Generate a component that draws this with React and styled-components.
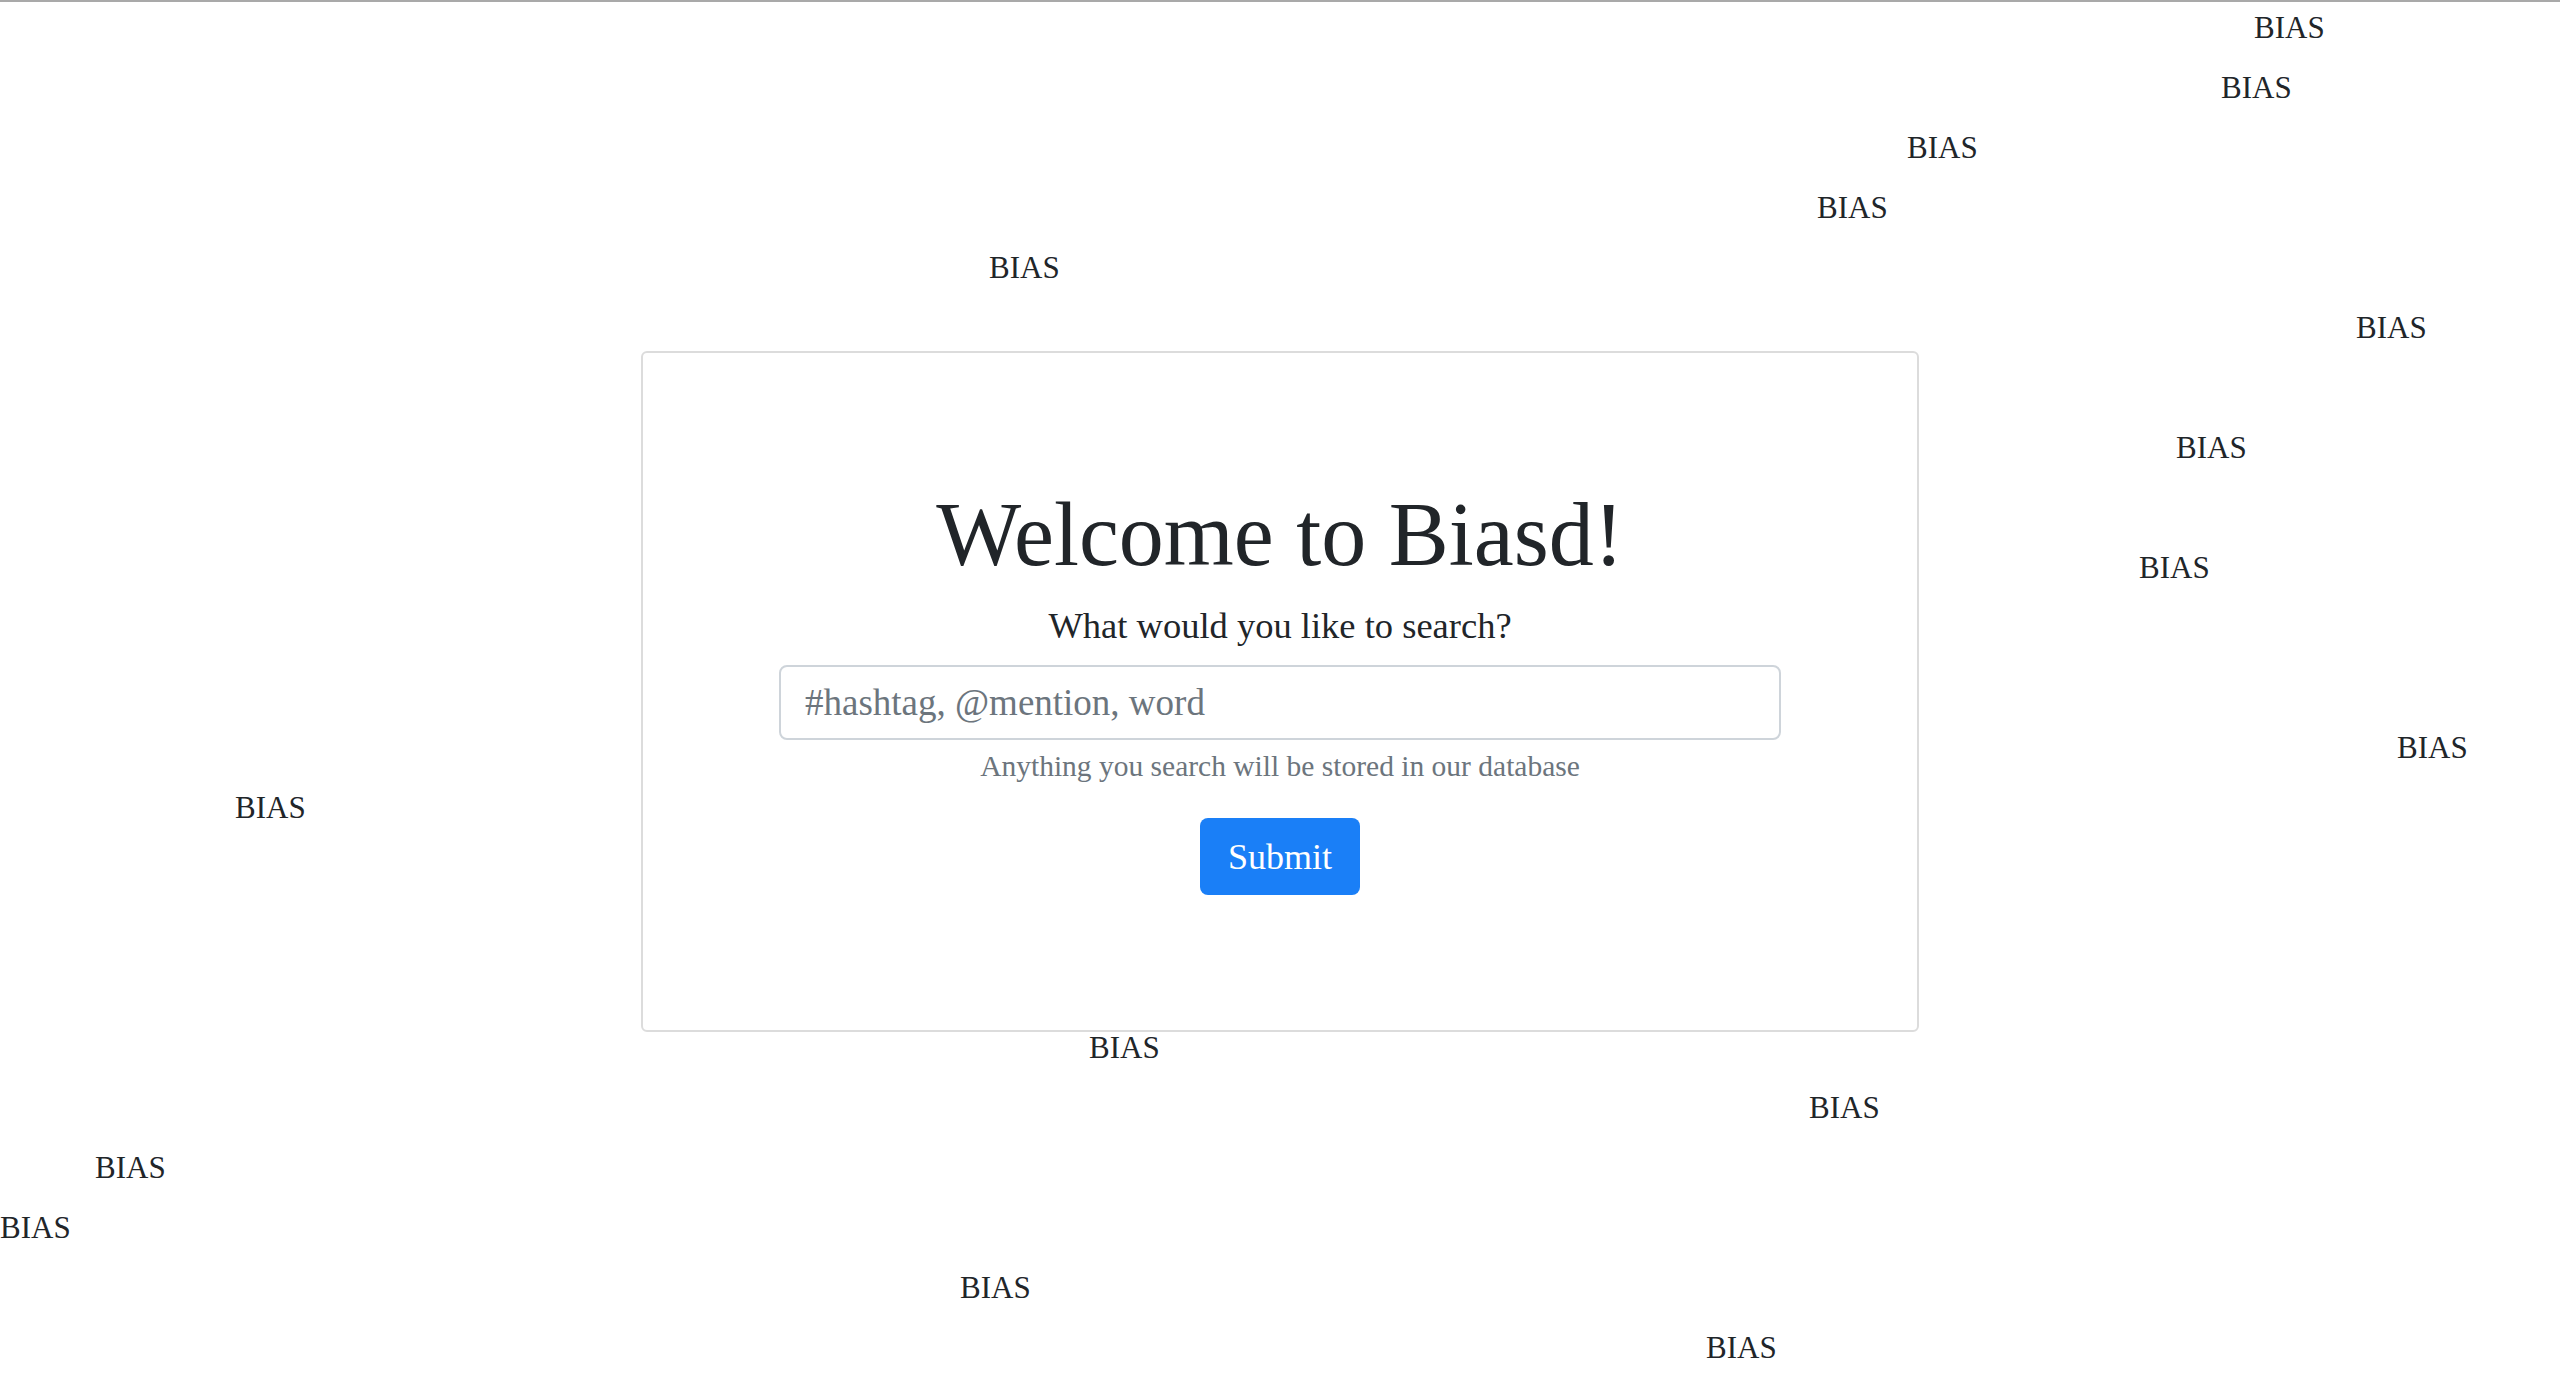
import styled, {createGlobalStyle} from "styled-components";

const GlobalStyle = createGlobalStyle`
  html, body {
    margin: 0;
    padding: 0;
    height: 100%;
    overflow: hidden;
    background: #fff;
  }
  body {
    font-family: "Liberation Serif", "Times New Roman", serif;
    color: #212529;
  }
`;

const Page = styled.div`
  position: relative;
  height: 100vh;
  border-top: 2px solid #a9a9a9;
  box-sizing: border-box;
  overflow: hidden;
`;

const WordList = styled.div`
  display: flex;
  flex-direction: column;
  margin-top: -4px;
`;

const Word = styled.div`
  height: 60px;
  line-height: 60px;
  font-size: 31px;
  white-space: nowrap;
  padding-left: ${(p) => p.$x}px;
`;

const Card = styled.form`
  position: absolute;
  top: 0;
  bottom: 0;
  left: 0;
  right: 0;
  margin: auto;
  width: 1278px;
  height: 681px;
  box-sizing: border-box;
  padding-bottom: 4px;
  background: #fff;
  border: 2px solid #dcdcdc;
  border-radius: 6px;
  display: flex;
  flex-direction: column;
  align-items: center;
  justify-content: center;
`;

const Title = styled.h1`
  margin: 0 0 0;
  font-size: 90px;
  font-weight: 400;
  line-height: 1.2;
  color: #212529;
  position: relative;
  top: -2px;
`;

const Subtitle = styled.p`
  margin: 8px 0 12px;
  font-size: 36.5px;
  line-height: 1.5;
`;

const SearchInput = styled.input`
  width: 1002px;
  height: 75px;
  box-sizing: border-box;
  padding: 0 24px;
  border: 2px solid #ced4da;
  border-radius: 8px;
  font-family: "Liberation Serif", "Times New Roman", serif;
  font-size: 37px;
  color: #212529;
  outline: none;

  &::placeholder {
    color: #6c757d;
  }
`;

const HelpText = styled.div`
  margin-top: 4px;
  font-size: 29.5px;
  line-height: 45px;
  color: #6c757d;
`;

const SubmitButton = styled.button`
  margin-top: 29px;
  width: 160px;
  height: 77px;
  border: none;
  border-radius: 8px;
  background: #1a7ff7;
  color: #fff;
  font-family: "Liberation Serif", "Times New Roman", serif;
  font-size: 36px;
  cursor: pointer;
`;

// left offset of each BIAS row; rows 6, 8, 10, 11, 14, 15, 16 sit behind the card
const offsets = [
  2254, 2221, 1907, 1817, 989, 2356, 1200, 2176, 690, 2139, 690, 680,
  2397, 235, 690, 700, 1600, 1089, 1809, 95, -3, 960, 1706,
];

const App = () => {
  return (
    <>
      <GlobalStyle />
      <Page>
        <WordList>
          {offsets.map((x, i) => (
            <Word key={i} $x={x}>BIAS</Word>
          ))}
        </WordList>
        <Card onSubmit={(e) => e.preventDefault()}>
          <Title>Welcome to Biasd!</Title>
          <Subtitle>What would you like to search?</Subtitle>
          <SearchInput type="text" placeholder="#hashtag, @mention, word" />
          <HelpText>Anything you search will be stored in our database</HelpText>
          <SubmitButton type="submit">Submit</SubmitButton>
        </Card>
      </Page>
    </>
  );
};

export default App;
